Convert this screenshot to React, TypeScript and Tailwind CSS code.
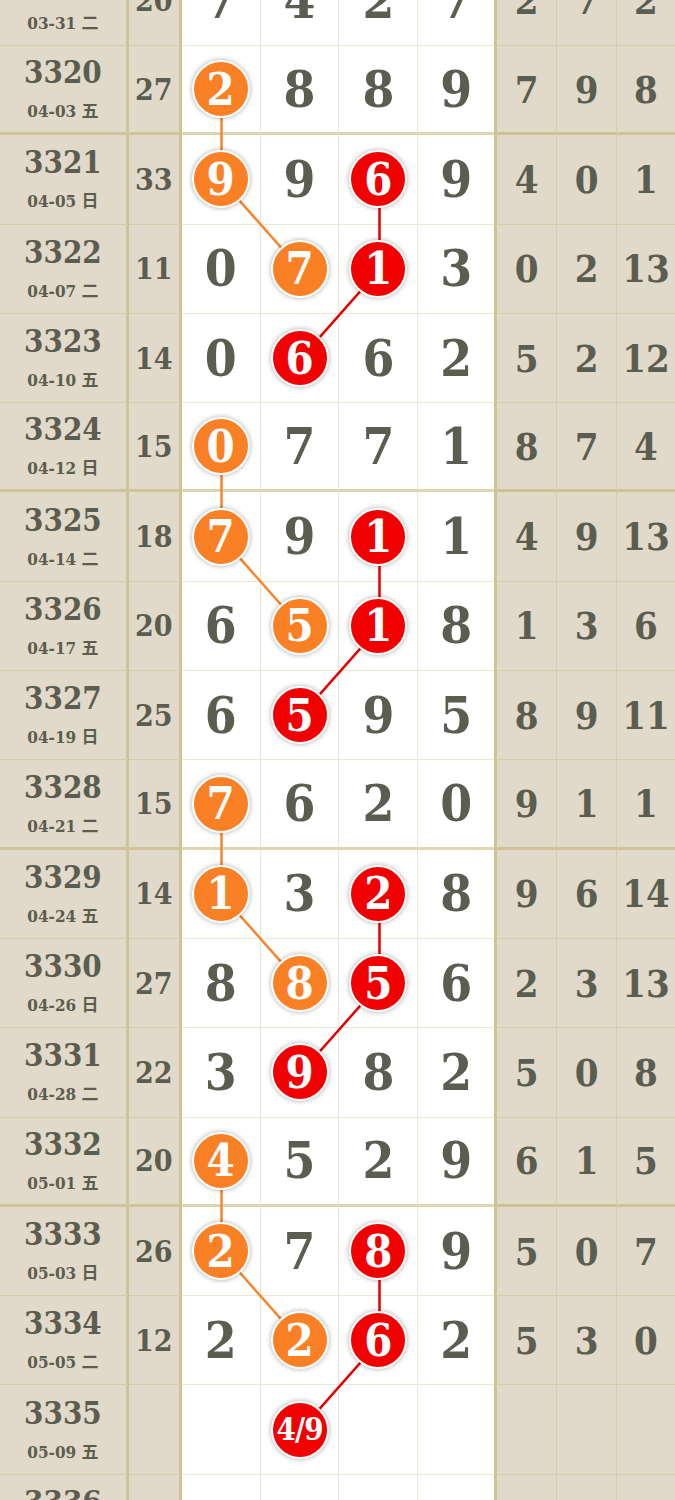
import React from "react";

type Mark = "o" | "r";

interface Row {
  no: string;
  date: string;
  sum: string;
  d: string[];
  r: string[];
  m?: Record<number, Mark>;
}

const rows: Row[] = [
  { no: "3319", date: "03-31 二", sum: "20", d: ["7", "4", "2", "7"], r: ["2", "7", "2"] },
  { no: "3320", date: "04-03 五", sum: "27", d: ["2", "8", "8", "9"], r: ["7", "9", "8"], m: { 0: "o" } },
  { no: "3321", date: "04-05 日", sum: "33", d: ["9", "9", "6", "9"], r: ["4", "0", "1"], m: { 0: "o", 2: "r" } },
  { no: "3322", date: "04-07 二", sum: "11", d: ["0", "7", "1", "3"], r: ["0", "2", "13"], m: { 1: "o", 2: "r" } },
  { no: "3323", date: "04-10 五", sum: "14", d: ["0", "6", "6", "2"], r: ["5", "2", "12"], m: { 1: "r" } },
  { no: "3324", date: "04-12 日", sum: "15", d: ["0", "7", "7", "1"], r: ["8", "7", "4"], m: { 0: "o" } },
  { no: "3325", date: "04-14 二", sum: "18", d: ["7", "9", "1", "1"], r: ["4", "9", "13"], m: { 0: "o", 2: "r" } },
  { no: "3326", date: "04-17 五", sum: "20", d: ["6", "5", "1", "8"], r: ["1", "3", "6"], m: { 1: "o", 2: "r" } },
  { no: "3327", date: "04-19 日", sum: "25", d: ["6", "5", "9", "5"], r: ["8", "9", "11"], m: { 1: "r" } },
  { no: "3328", date: "04-21 二", sum: "15", d: ["7", "6", "2", "0"], r: ["9", "1", "1"], m: { 0: "o" } },
  { no: "3329", date: "04-24 五", sum: "14", d: ["1", "3", "2", "8"], r: ["9", "6", "14"], m: { 0: "o", 2: "r" } },
  { no: "3330", date: "04-26 日", sum: "27", d: ["8", "8", "5", "6"], r: ["2", "3", "13"], m: { 1: "o", 2: "r" } },
  { no: "3331", date: "04-28 二", sum: "22", d: ["3", "9", "8", "2"], r: ["5", "0", "8"], m: { 1: "r" } },
  { no: "3332", date: "05-01 五", sum: "20", d: ["4", "5", "2", "9"], r: ["6", "1", "5"], m: { 0: "o" } },
  { no: "3333", date: "05-03 日", sum: "26", d: ["2", "7", "8", "9"], r: ["5", "0", "7"], m: { 0: "o", 2: "r" } },
  { no: "3334", date: "05-05 二", sum: "12", d: ["2", "2", "6", "2"], r: ["5", "3", "0"], m: { 1: "o", 2: "r" } },
  { no: "3335", date: "05-09 五", sum: "", d: ["", "4/9", "", ""], r: ["", "", ""], m: { 1: "r" } },
  { no: "3336", date: "05-12 日", sum: "", d: ["", "", "", ""], r: ["", "", ""] },
];

const ROW_H = 89.3;
const colX = [221.5, 300.5, 379.5, 456];
const cy = (i: number) => i * ROW_H + ROW_H / 2;

// rows (by index) that close a group of four get the heavy rule
const thick = new Set([1, 5, 9, 13]);

const whiteW = ["w-[79px]", "w-[79px]", "w-[79px]", "w-[76px]"];
const rightW = ["w-[63px] border-l-[3px] border-l-[rgba(190,175,100,0.5)]", "w-[60px]", "w-[58px]"];

function Ball({ v, kind }: { v: string; kind: Mark }) {
  const bg = kind === "o" ? "bg-[#fa8025]" : "bg-[#f00000]";
  const size = v.length > 1 ? "text-[31px] tracking-[-1px]" : "text-[45px]";
  return (
    <div
      className={`relative z-10 flex h-[58px] w-[58px] items-center justify-center rounded-full border-2 border-white ${bg} shadow-[0_0_5px_rgba(0,0,0,0.35)]`}
    >
      <span className={`${size} leading-none text-white`}>{v}</span>
    </div>
  );
}

export default function App() {
  const segs: { pts: [number, number][]; color: string }[] = [];
  [1, 5, 9, 13].forEach((s) => {
    segs.push({
      pts: [
        [colX[0], cy(s)],
        [colX[0], cy(s + 1)],
        [colX[1], cy(s + 2)],
      ],
      color: "#f6862e",
    });
    segs.push({
      pts: [
        [colX[2], cy(s + 1)],
        [colX[2], cy(s + 2)],
        [colX[1], cy(s + 3)],
      ],
      color: "#e80000",
    });
  });

  return (
    <div className="h-[1500px] w-[675px] overflow-hidden bg-white font-['DejaVu_Serif_Condensed','DejaVu_Serif','Noto_Sans_CJK_SC',serif] font-bold text-[#5b5d50] [font-stretch:condensed]">
      <div className="relative -mt-[43.3px]">
        <svg className="pointer-events-none absolute left-0 top-0 z-0" width="675" height={ROW_H * rows.length}>
          {segs.map((s, i) => (
            <polyline
              key={i}
              points={s.pts.map((p) => p.join(",")).join(" ")}
              fill="none"
              stroke={s.color}
              strokeWidth="2.5"
            />
          ))}
        </svg>
        {rows.map((row, i) => {
          const rule = thick.has(i)
            ? "border-b-[3px] border-b-[rgba(190,175,100,0.5)]"
            : "border-b border-b-[rgba(190,175,100,0.3)]";
          return (
            <div key={row.no} className="flex h-[89.3px]">
              <div
                className={`flex w-[129px] flex-col items-center justify-center gap-[13px] border-r-[3px] border-r-[rgba(190,175,100,0.5)] bg-[#e1d9c9] ${rule}`}
              >
                <span className="text-[31px] leading-[31px]">{row.no}</span>
                <span className="text-[17px] leading-[20px]">{row.date}</span>
              </div>
              <div
                className={`flex w-[53px] items-center justify-center border-r-[3px] border-r-[rgba(190,175,100,0.5)] bg-[#e1d9c9] text-[30px] ${rule}`}
              >
                {row.sum}
              </div>
              {row.d.map((v, j) => (
                <div
                  key={j}
                  className={`flex ${whiteW[j]} items-center justify-center ${
                    j < 3 ? "border-r border-r-[rgba(190,175,100,0.3)]" : ""
                  } ${rule}`}
                >
                  {row.m && row.m[j] ? (
                    <Ball v={v} kind={row.m[j]} />
                  ) : (
                    <span className="relative z-10 text-[51px] leading-none">{v}</span>
                  )}
                </div>
              ))}
              {row.r.map((v, j) => (
                <div
                  key={j}
                  className={`flex ${rightW[j]} items-center justify-center bg-[#e1d9c9] text-[38px] ${
                    j < 2 ? "border-r border-r-[rgba(190,175,100,0.3)]" : ""
                  } ${rule}`}
                >
                  {v}
                </div>
              ))}
            </div>
          );
        })}
      </div>
    </div>
  );
}
